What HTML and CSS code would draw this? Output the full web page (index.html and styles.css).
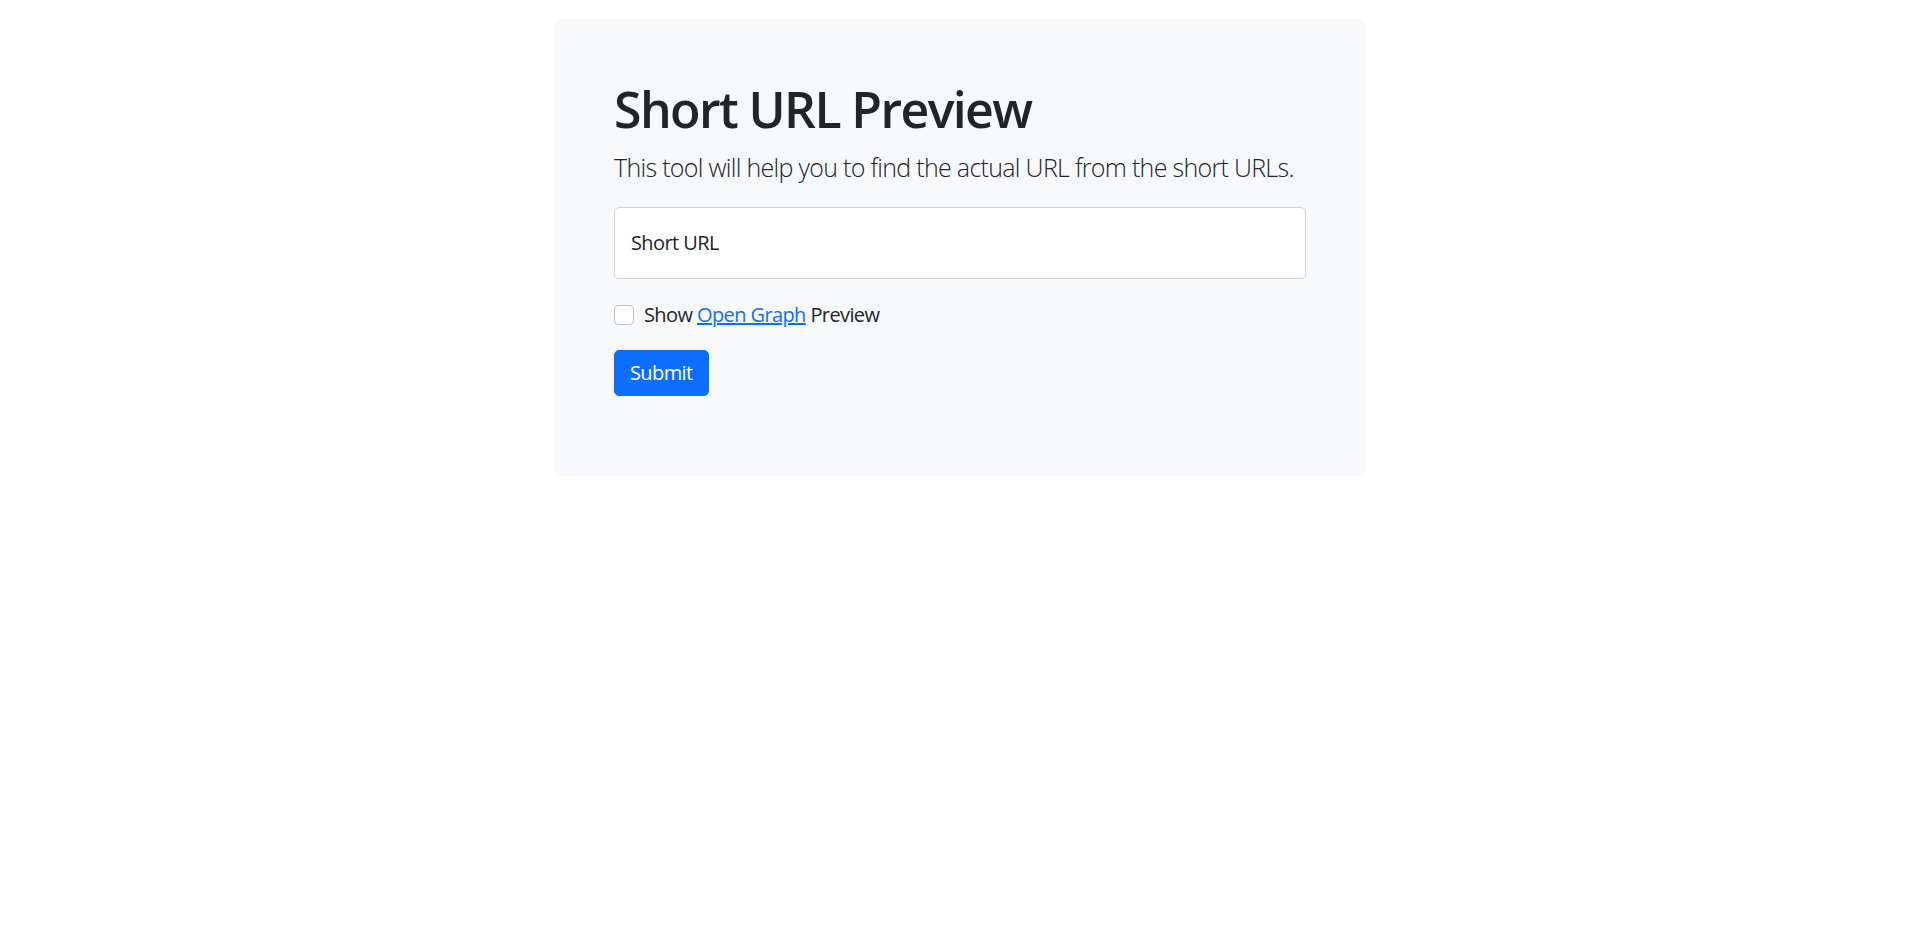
FILE: index.html
```html
<!DOCTYPE html>
<html lang="en">
    <head>
        <meta charset="utf-8">
        <meta name="viewport" content="width=device-width, initial-scale=1.0">
        <title>Short URL Preview</title>
        <link rel="stylesheet" href="styles.css">
    </head>
    <body>
        <div class="jumbotron">
            <h1 class="title">Short URL Preview</h1>
            <p class="lead">This tool will help you to find the actual URL from the short URLs.</p>
            <form class="url-form" onsubmit="return false;">
                <input type="text" class="url-input" placeholder="Short URL">
                <div class="check-row">
                    <input type="checkbox" id="og" class="check-input">
                    <label for="og">Show <a href="#">Open Graph</a> Preview</label>
                </div>
                <button type="submit" class="btn-submit">Submit</button>
            </form>
        </div>
    </body>
</html>
```

FILE: styles.css
```css
body{
    margin: 0;
    font-family: "Open Sans", "Noto Sans", sans-serif;
    font-size: 20px;
    line-height: 1.5;
    letter-spacing: -0.6px;
    color: #212529;
    background: #fff;
}
.jumbotron{
    width: 812px;
    box-sizing: border-box;
    margin: 19px auto 0;
    padding: 60px;
    background: #f8f9fa;
    border-radius: 6px;
}
.title{
    margin: 0 0 10px;
    font-size: 50px;
    font-weight: 600;
    line-height: 1.2;
    letter-spacing: -1.6px;
}
.lead{
    margin: 0 0 20px;
    font-size: 25px;
    font-weight: 300;
    letter-spacing: -0.7px;
    white-space: nowrap;
}
.url-form{
    display: flex;
    flex-direction: column;
    align-items: flex-start;
    gap: 20px;
    margin-bottom: 20px;
}
.url-input{
    width: 100%;
    height: 72px;
    box-sizing: border-box;
    padding: 0 16px;
    font: inherit;
    letter-spacing: inherit;
    color: #212529;
    background: #fff;
    border: 1px solid #ced4da;
    border-radius: 5px;
}
.url-input::placeholder{
    color: #212529;
    opacity: 1;
}
.check-row{
    display: flex;
    align-items: center;
    gap: 10px;
    padding-top: 1px;
}
.check-input{
    appearance: none;
    width: 20px;
    height: 20px;
    margin: 0;
    background: #fff;
    border: 1px solid rgba(0,0,0,0.25);
    border-radius: 5px;
}
.check-row a{
    color: #0d6efd;
}
.btn-submit{
    padding: 7px 15px;
    font: inherit;
    letter-spacing: inherit;
    color: #fff;
    background: #0d6efd;
    border: 1px solid #0d6efd;
    border-radius: 5px;
    cursor: pointer;
}
```
